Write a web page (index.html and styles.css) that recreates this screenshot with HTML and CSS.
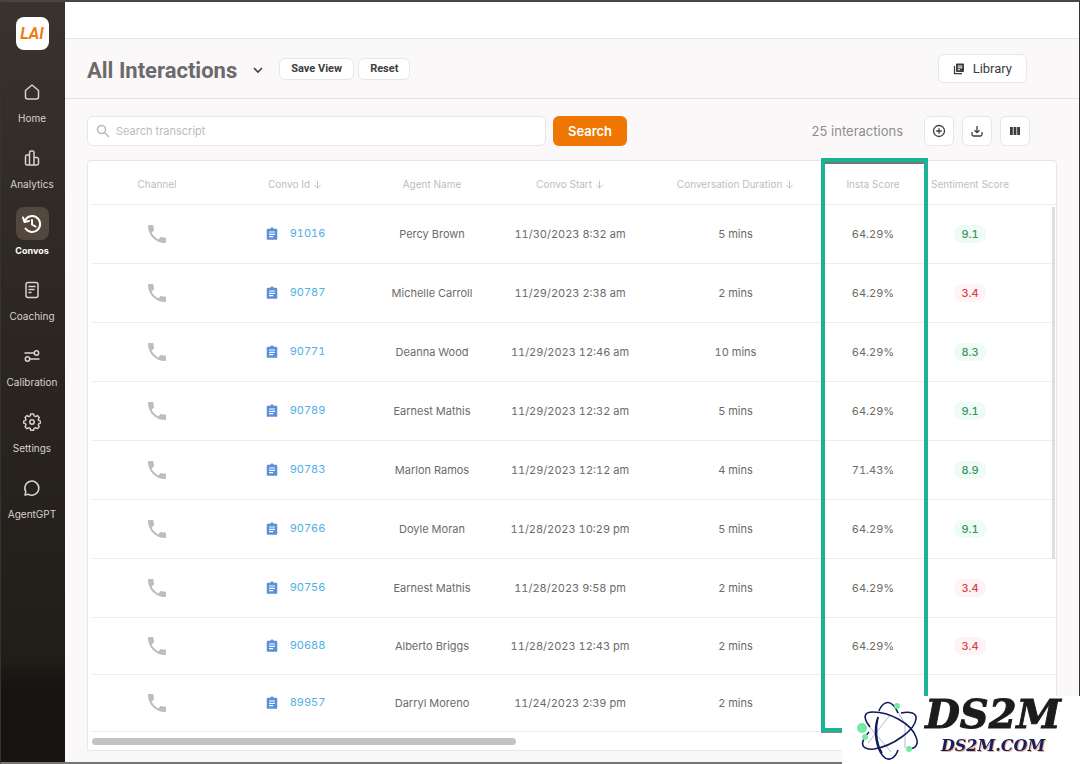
FILE: index.html
```html
<!DOCTYPE html>
<html lang="en">
<head>
    <meta charset="UTF-8">
    <meta name="viewport" content="width=device-width, initial-scale=1.0">
    <title>All Interactions</title>
    <link rel="stylesheet" href="styles.css">
</head>
<body>
    <svg class="sprite" aria-hidden="true">
        <symbol id="phone" viewBox="0 0 24 24">
            <path d="M6.620 10.790c1.440 2.830 3.760 5.140 6.590 6.590l2.200-2.200c.27-.27.67-.36 1.020-.24 1.120.37 2.330.57 3.570.57.55 0 1 .45 1 1V20c0 .55-.45 1-1 1C10.610 21 3 13.390 3 4c0-.55.45-1 1-1h3.500c.55 0 1 .45 1 1 0 1.250.2 2.450.57 3.570.11.35.03.74-.25 1.020z"/>
        </symbol>
        <symbol id="clip" viewBox="0 0 24 24">
            <path d="M19 3h-4.200C14.400 1.800 13.300 1 12 1s-2.400.8-2.800 2H5a2 2 0 0 0-2 2v15a2 2 0 0 0 2 2h14a2 2 0 0 0 2-2V5a2 2 0 0 0-2-2zm-5 14.500H7v-2h7zm3-4H7v-2h10zm0-4H7v-2h10z"/>
        </symbol>
        <symbol id="down" viewBox="0 0 10 10">
            <path d="M5 1v8M1.500 5.500 5 9l3.500-3.500" fill="none" stroke="currentColor"/>
        </symbol>
    </svg>

    <div class="app">
        <aside class="sidebar">
            <div class="logo">LAI</div>
            <nav class="menu">
                <a href="#" class="menu-item">
                    <span class="menu-icon"><svg viewBox="0 0 18 18"><path d="M2.500 7.500 9 2l6.500 5.500V14a2 2 0 0 1-2 2h-9a2 2 0 0 1-2-2z"/></svg></span>
                    <span>Home</span>
                </a>
                <a href="#" class="menu-item">
                    <span class="menu-icon"><svg viewBox="0 0 18 18"><path d="M6.500 16V3.500a1.500 1.500 0 0 1 1.500-1.500h1.500A1.500 1.500 0 0 1 11 3.500V16M6.500 6H4a1.500 1.500 0 0 0-1.500 1.500v7A1.500 1.500 0 0 0 4 16h10a1.500 1.500 0 0 0 1.500-1.500V10A1.500 1.500 0 0 0 14 8.500h-3"/></svg></span>
                    <span>Analytics</span>
                </a>
                <a href="#" class="menu-item active">
                    <span class="menu-icon"><svg class="big" viewBox="0 0 22 22"><path d="M3.500 8.500A8 8 0 1 1 4.500 15.500M2 4.500l1.500 4.500 4.500-1M11 7v4.500l3.500 2"/></svg></span>
                    <span>Convos</span>
                </a>
                <a href="#" class="menu-item">
                    <span class="menu-icon"><svg viewBox="0 0 18 18"><rect x="3" y="1.500" width="12" height="15" rx="2"/><path d="M6 5.500h6M6 8.500h5M6 11.500h2"/></svg></span>
                    <span>Coaching</span>
                </a>
                <a href="#" class="menu-item">
                    <span class="menu-icon"><svg viewBox="0 0 18 18"><path d="M2 6h9M7 12h9"/><circle cx="13.500" cy="6" r="2.200"/><circle cx="4.500" cy="12" r="2.200"/></svg></span>
                    <span>Calibration</span>
                </a>
                <a href="#" class="menu-item">
                    <span class="menu-icon"><svg viewBox="0 0 18 18"><path d="M7.500 1.500h3l.5 2 1.500.7 1.900-1 2 2-1 1.900.6 1.400 2 .5v2l-2 .6-.6 1.400 1 1.900-2 2-1.900-1-1.500.6-.5 2h-3l-.5-2-1.500-.6-1.900 1-2-2 1-1.900-.6-1.400-2-.6V9l2-.5.6-1.400-1-1.900 2-2 1.900 1L7 3.500z" transform="translate(0.500 -0.500) scale(0.960)"/><circle cx="9" cy="9" r="2.200"/></svg></span>
                    <span>Settings</span>
                </a>
                <a href="#" class="menu-item">
                    <span class="menu-icon"><svg viewBox="0 0 18 18"><path d="M2 16l.8-3.300A7 7 0 1 1 5.500 15.300z"/></svg></span>
                    <span>AgentGPT</span>
                </a>
            </nav>
        </aside>

        <main class="main">
            <div class="topbar"></div>

            <header class="header">
                <h1>All Interactions</h1>
                <button class="chevron" aria-label="Choose view"><svg viewBox="0 0 12 8"><path d="M2 2l4 4 4-4"/></svg></button>
                <button class="btn small">Save View</button>
                <button class="btn small">Reset</button>
                <button class="btn library">
                    <svg viewBox="0 0 24 24"><path d="M3 6v15h15" fill="none" stroke="currentColor" stroke-width="2.500"/><path d="M8 1h12a2 2 0 0 1 2 2v13a2 2 0 0 1-2 2H8a2 2 0 0 1-2-2V3a2 2 0 0 1 2-2zm1.500 4v2h9V5zm0 3.700v2h9v-2zm0 3.600v2H14v-2z" fill-rule="evenodd"/></svg>
                    Library
                </button>
            </header>

            <div class="toolbar">
                <label class="search">
                    <svg viewBox="0 0 14 14"><circle cx="5.500" cy="5.500" r="4"/><path d="M8.500 8.500l4.500 4.500"/></svg>
                    <input type="text" placeholder="Search transcript" aria-label="Search transcript">
                </label>
                <button class="search-btn">Search</button>
                <span class="count">25 interactions</span>
                <div class="tools">
                    <button class="btn tool" aria-label="Add"><svg viewBox="0 0 14 14"><circle cx="7" cy="7" r="5.500"/><path d="M7 4.200v5.600M4.200 7h5.600"/></svg></button>
                    <button class="btn tool" aria-label="Download"><svg viewBox="0 0 14 14"><path d="M7 2v6.500M4.500 6.200 7 8.700l2.500-2.500M2 8v2.500a1.500 1.500 0 0 0 1.500 1.500h7a1.500 1.500 0 0 0 1.500-1.500V8"/></svg></button>
                    <button class="btn tool" aria-label="Columns"><svg viewBox="0 0 14 14"><path d="M2 3h2.800v8H2zM5.600 3h2.800v8H5.600zM9.200 3H12v8H9.200z" fill="currentColor" stroke="none"/></svg></button>
                </div>
            </div>

            <section class="card">
                <table>
                    <colgroup>
                        <col class="c-channel"><col class="c-id"><col class="c-agent"><col class="c-start"><col class="c-duration"><col class="c-insta"><col class="c-sentiment"><col class="c-rest">
                    </colgroup>
                    <thead>
                        <tr>
                            <th>Channel</th>
                            <th>Convo Id <svg><use href="#down"/></svg></th>
                            <th>Agent Name</th>
                            <th>Convo Start <svg><use href="#down"/></svg></th>
                            <th>Conversation Duration <svg><use href="#down"/></svg></th>
                            <th>Insta Score</th>
                            <th>Sentiment Score</th>
                            <th></th>
                        </tr>
                    </thead>
                    <tbody>
                        <tr>
                            <td><svg class="phone"><use href="#phone"/></svg></td>
                            <td><a href="#"><svg class="clip"><use href="#clip"/></svg>91016</a></td>
                            <td>Percy Brown</td><td>11/30/2023 8:32 am</td><td>5 mins</td><td>64.29%</td>
                            <td><span class="score good">9.1</span></td><td></td>
                        </tr>
                        <tr>
                            <td><svg class="phone"><use href="#phone"/></svg></td>
                            <td><a href="#"><svg class="clip"><use href="#clip"/></svg>90787</a></td>
                            <td>Michelle Carroll</td><td>11/29/2023 2:38 am</td><td>2 mins</td><td>64.29%</td>
                            <td><span class="score bad">3.4</span></td><td></td>
                        </tr>
                        <tr>
                            <td><svg class="phone"><use href="#phone"/></svg></td>
                            <td><a href="#"><svg class="clip"><use href="#clip"/></svg>90771</a></td>
                            <td>Deanna Wood</td><td>11/29/2023 12:46 am</td><td>10 mins</td><td>64.29%</td>
                            <td><span class="score good">8.3</span></td><td></td>
                        </tr>
                        <tr>
                            <td><svg class="phone"><use href="#phone"/></svg></td>
                            <td><a href="#"><svg class="clip"><use href="#clip"/></svg>90789</a></td>
                            <td>Earnest Mathis</td><td>11/29/2023 12:32 am</td><td>5 mins</td><td>64.29%</td>
                            <td><span class="score good">9.1</span></td><td></td>
                        </tr>
                        <tr>
                            <td><svg class="phone"><use href="#phone"/></svg></td>
                            <td><a href="#"><svg class="clip"><use href="#clip"/></svg>90783</a></td>
                            <td>Marlon Ramos</td><td>11/29/2023 12:12 am</td><td>4 mins</td><td>71.43%</td>
                            <td><span class="score good">8.9</span></td><td></td>
                        </tr>
                        <tr>
                            <td><svg class="phone"><use href="#phone"/></svg></td>
                            <td><a href="#"><svg class="clip"><use href="#clip"/></svg>90766</a></td>
                            <td>Doyle Moran</td><td>11/28/2023 10:29 pm</td><td>5 mins</td><td>64.29%</td>
                            <td><span class="score good">9.1</span></td><td></td>
                        </tr>
                        <tr>
                            <td><svg class="phone"><use href="#phone"/></svg></td>
                            <td><a href="#"><svg class="clip"><use href="#clip"/></svg>90756</a></td>
                            <td>Earnest Mathis</td><td>11/28/2023 9:58 pm</td><td>2 mins</td><td>64.29%</td>
                            <td><span class="score bad">3.4</span></td><td></td>
                        </tr>
                        <tr class="short">
                            <td><svg class="phone"><use href="#phone"/></svg></td>
                            <td><a href="#"><svg class="clip"><use href="#clip"/></svg>90688</a></td>
                            <td>Alberto Briggs</td><td>11/28/2023 12:43 pm</td><td>2 mins</td><td>64.29%</td>
                            <td><span class="score bad">3.4</span></td><td></td>
                        </tr>
                        <tr class="short">
                            <td><svg class="phone"><use href="#phone"/></svg></td>
                            <td><a href="#"><svg class="clip"><use href="#clip"/></svg>89957</a></td>
                            <td>Darryl Moreno</td><td>11/24/2023 2:39 pm</td><td>2 mins</td><td></td>
                            <td></td><td></td>
                        </tr>
                    </tbody>
                </table>
                <div class="scroll-x"><div class="thumb"></div></div>
                <div class="scroll-y"></div>
                <div class="highlight"></div>
            </section>
        </main>
    </div>

    <div class="watermark">
        <svg viewBox="0 0 64 64" fill="none">
            <g stroke="#b5b8d2" stroke-width="1">
                <path d="M41 12l8 14v24M12 27l23 27M12 45l22-28"/>
            </g>
            <g stroke="#111a5c" stroke-width="1.600">
                <path d="M23 13c3-8 9-11 14-6 2 2 4 5 5 8"/>
                <path d="M22 19c-5 13-2 31 5 39 5 6 12 3 15-6"/>
                <path d="M22 19c-3 12-2 26 4 36"/>
                <path d="M45 15c9-2 16 0 15 6-1 11-23 27-42 30-8 1-13-2-11-8 1-3 3-6 6-9"/>
                <path d="M14 29C7 20 7 14 17 14c16 0 38 11 43 25 3 7 0 12-8 12"/>
            </g>
            <g fill="#72eda0">
                <circle cx="41" cy="8" r="3"/><circle cx="6" cy="30" r="5"/><circle cx="9" cy="39" r="3"/><circle cx="53" cy="51" r="3"/>
            </g>
        </svg>
        <div class="brand">
            <strong>DS2M</strong>
            <span>DS2M.COM</span>
        </div>
    </div>
</body>
</html>
```
FILE: styles.css
```css
* {
    box-sizing: border-box;
}
body {
    margin: 0;
    font-family: Inter, "Liberation Sans", sans-serif;
    font-size: 12px;
    color: #6b6b6b;
    background: #faf8f9;
}
button, input {
    font: inherit;
    color: inherit;
}
button {
    cursor: pointer;
}
a {
    text-decoration: none;
    color: inherit;
}
.sprite {
    position: absolute;
    width: 0;
    height: 0;
}
.app {
    display: flex;
    min-height: 100vh;
    border: 1px solid #333;
    border-top: 2px solid #4a4448;
    border-bottom: 2px solid #777;
}

/* sidebar */
.sidebar {
    flex: none;
    width: 64px;
    padding: 15px 2px 0 0;
    background: linear-gradient(#39332d, #2b2621 45%, #211d18 86%, #181412 90%);
}
.logo {
    width: 33px;
    height: 33px;
    margin: 0 auto 25px;
    border-radius: 8px;
    background: #fff;
    color: #f07c12;
    font: italic 700 16px/33px Roboto, sans-serif;
    text-align: center;
}
.menu-item {
    display: flex;
    flex-direction: column;
    align-items: center;
    gap: 4px;
    height: 66px;
    font-size: 10px;
    line-height: 13px;
    color: #d6d2ce;
}
.menu-icon {
    display: flex;
    align-items: center;
    justify-content: center;
    width: 33px;
    height: 33px;
    border-radius: 8px;
}
.menu-icon svg {
    width: 18px;
    height: 18px;
    fill: none;
    stroke: currentColor;
    stroke-width: 1.5;
    stroke-linejoin: round;
    stroke-linecap: round;
}
.menu-icon .big {
    width: 22px;
    height: 22px;
    stroke-width: 2;
}
.active {
    font-size: 9px;
    font-weight: 700;
    color: #fff;
}
.active .menu-icon {
    background: #54483e;
}

/* header */
.main {
    flex: 1;
    min-width: 0;
}
.topbar {
    height: 37px;
    background: #fff;
    border-bottom: 1px solid #e6e4e5;
}
.header {
    display: flex;
    align-items: center;
    height: 60px;
    padding: 0 52px 0 22px;
    border-bottom: 1px solid #e2e0e1;
}
h1 {
    margin: 0;
    padding-top: 4px;
    font: 700 22px/28px Roboto, sans-serif;
    color: #6c6a6b;
}
.chevron {
    width: 42px;
    padding: 3px 0 0;
    border: 0;
    background: none;
}
.chevron svg {
    display: block;
    width: 12px;
    height: 8px;
    margin: auto;
    fill: none;
    stroke: #444;
    stroke-width: 1.6;
}
.btn {
    border: 1px solid #e8e6e7;
    border-radius: 6px;
    background: #fff;
    color: #3c3c3c;
}
.small {
    height: 22px;
    margin-right: 4px;
    padding: 0 11px;
    font: 700 11px/20px Roboto, sans-serif;
}
.library {
    display: flex;
    align-items: center;
    gap: 8px;
    height: 29px;
    margin-left: auto;
    padding: 0 14px;
    font: 400 13px/20px Roboto, sans-serif;
}
.library svg {
    width: 12px;
    height: 12px;
    fill: currentColor;
}

/* toolbar */
.toolbar {
    display: flex;
    align-items: center;
    padding: 17px 49px 14px 22px;
}
.search {
    display: flex;
    align-items: center;
    flex: 1;
    gap: 6px;
    height: 30px;
    padding: 0 8px;
    border: 1px solid #e8e6e7;
    border-radius: 6px;
    background: #fff;
}
.search svg {
    width: 14px;
    height: 14px;
    fill: none;
    stroke: #bdbdbd;
    stroke-width: 1.6;
}
.search input {
    flex: 1;
    min-width: 0;
    padding: 0;
    border: 0;
    outline: 0;
    background: none;
    font-size: 11px;
}
.search input::placeholder {
    color: #bcbcbc;
}
.search-btn {
    width: 74px;
    height: 30px;
    margin-left: 7px;
    padding: 0;
    border: 0;
    border-radius: 6px;
    background: #f07602;
    color: #fff;
    font-size: 13px;
    font-weight: 600;
}
.count {
    width: 276px;
    font-size: 13px;
    text-align: right;
    color: #8e8e8e;
}
.tools {
    display: flex;
    gap: 8px;
    margin-left: 21px;
}
.tool {
    width: 30px;
    height: 30px;
    padding: 0;
}
.tool svg {
    display: block;
    width: 14px;
    height: 14px;
    margin: auto;
    fill: none;
    stroke: currentColor;
    stroke-width: 1.3;
}

/* table */
.card {
    position: relative;
    margin: 0 22px;
    padding-left: 4px;
    border: 1px solid #e8e6e7;
    border-radius: 4px 4px 0 0;
    background: #fff;
}
table {
    width: 100%;
    table-layout: fixed;
    border-collapse: collapse;
}
.c-channel {
    width: 130px;
}
.c-id {
    width: 146px;
}
.c-agent {
    width: 128px;
}
.c-start {
    width: 148px;
}
.c-duration {
    width: 183px;
}
.c-insta {
    width: 92px;
}
.c-sentiment {
    width: 102px;
}
.c-rest {
    width: 35px;
}
th, td {
    padding: 0;
    text-align: center;
    white-space: nowrap;
    border-bottom: 1px solid #eeecec;
}
th {
    height: 43px;
    padding-top: 3px;
    font-size: 10px;
    font-weight: 400;
    color: #bdbdbd;
}
th svg {
    width: 9px;
    height: 9px;
    vertical-align: -1px;
}
td {
    height: 59px;
    font-size: 11px;
    font-variant-numeric: tabular-nums;
}
.short td {
    height: 57px;
}
td svg {
    vertical-align: middle;
}
.phone {
    width: 24px;
    height: 24px;
    fill: #bdbdbd;
}
.clip {
    width: 14px;
    height: 14px;
    margin-right: 11px;
    fill: #5c8fd8;
}
td a {
    color: #4fb0e6;
}
.score {
    padding: 2px 7px;
    border-radius: 8px;
    font-weight: 500;
}
.good {
    background: #effcf5;
    color: #3c9468;
}
.bad {
    background: #fff4f4;
    color: #d8434e;
}
.scroll-x {
    padding: 6px 0 5px;
}
.thumb {
    width: 44%;
    height: 7px;
    border-radius: 4px;
    background: #c2c2c2;
}
.scroll-y {
    position: absolute;
    top: 46px;
    right: 1px;
    width: 3px;
    height: 352px;
    background: #dedede;
}
.highlight {
    position: absolute;
    top: -3px;
    right: 128px;
    bottom: 18px;
    width: 107px;
    border: 4px solid #1cb294;
    box-shadow: inset 0 2px #777, 0 1px #888;
}

/* watermark */
.watermark {
    position: fixed;
    right: 0;
    bottom: 0;
    display: flex;
    width: 238px;
    height: 68px;
    padding: 2px 14px 0;
    background: #fff;
}
.watermark svg {
    width: 64px;
    height: 64px;
}
.brand {
    display: flex;
    flex-direction: column;
    align-items: center;
    flex: 1;
    font-family: "DejaVu Serif", serif;
    font-style: italic;
    font-weight: 700;
}
.brand strong {
    font-size: 40px;
    line-height: 32px;
    color: #1c1c1c;
    -webkit-text-stroke: 1px #1c1c1c;
}
.brand span {
    margin-top: 5px;
    font-size: 16px;
    line-height: 22px;
    color: #16205f;
    text-shadow: 1px 1px #f2b48c;
}
```
